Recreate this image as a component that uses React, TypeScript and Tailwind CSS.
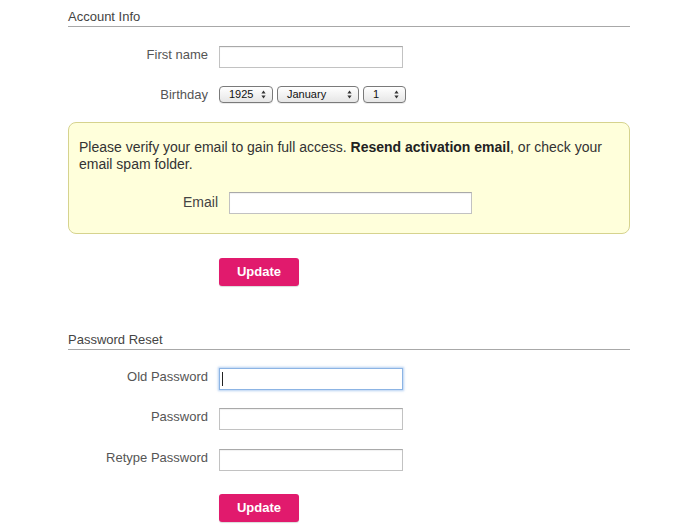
import { ReactNode } from "react";

const font = { fontFamily: '"Liberation Sans", Arial, Helvetica, sans-serif' };

function SectionTitle({ children }: { children: ReactNode }) {
    return (
        <div className="h-[18px] border-b border-[#a8a8a8] text-[13px] leading-[16px] text-[#444]">
            {children}
        </div>
    );
}

// label sits near the top edge of its field, not centred on it
function Row({ label, children, className = "", align = "items-start" }: { label: string; children: ReactNode; className?: string; align?: string }) {
    return (
        <div className={`flex ${align} gap-[11px] ${className}`}>
            <label className={`w-[140px] shrink-0 text-right text-[13px] leading-[16px] text-[#555] ${align === "items-start" ? "pt-[1px]" : ""}`}>
                {label}
            </label>
            {children}
        </div>
    );
}

function TextInput({ width = "w-[184px]", focused = false, type = "text" }: { width?: string; focused?: boolean; type?: string }) {
    return (
        <div className="relative">
            <input
                type={type}
                className={`${width} block h-[22px] rounded-none border bg-white px-1 text-[13px] outline-none ${
                    focused
                        ? "border-[#8cb4e4] shadow-[0_0_2px_1px_rgba(120,170,230,0.55)]"
                        : "border-[#c2c2c2] border-t-[#a9a9a9] shadow-[inset_0_1px_1px_rgba(0,0,0,0.06)]"
                }`}
            />
            {focused && <span className="pointer-events-none absolute left-[3px] top-[4px] h-[14px] w-px bg-[#222]" />}
        </div>
    );
}

function Arrows() {
    return (
        <svg width="5" height="9" viewBox="0 0 5 9" className="shrink-0">
            <path d="M2.5 0.5 L4.6 3.4 H0.4 Z" fill="#333" />
            <path d="M2.5 8.5 L4.6 5.6 H0.4 Z" fill="#333" />
        </svg>
    );
}

function PopUp({ value, width }: { value: string; width: string }) {
    return (
        <div
            className={`${width} flex h-[17px] items-center justify-between rounded-[4px] border border-[#7a7a7a] bg-gradient-to-b from-white to-[#e6e6e6] pl-[9px] pr-[6px] text-[11px] leading-[13px] text-[#111] shadow-[0_1px_0_rgba(0,0,0,0.08)]`}
        >
            <span>{value}</span>
            <Arrows />
        </div>
    );
}

function UpdateButton({ className = "" }: { className?: string }) {
    return (
        <button
            className={`ml-[151px] block h-[28px] w-[80px] rounded-[3px] bg-[#e11a6d] text-[13px] font-bold text-white shadow-[0_1px_1px_rgba(0,0,0,0.15)] ${className}`}
        >
            Update
        </button>
    );
}

export default function App() {
    return (
        <div className="h-[530px] w-[700px] bg-white pl-[68px] pt-[9px]" style={font}>
            <div className="w-[562px]">
                {/* Account Info */}
                <SectionTitle>Account Info</SectionTitle>

                <Row label="First name" className="mt-[19px]">
                    <TextInput />
                </Row>

                <Row label="Birthday" className="mt-[18px]" align="items-center">
                    <div className="flex gap-[4px]">
                        <PopUp value="1925" width="w-[54px]" />
                        <PopUp value="January" width="w-[82px]" />
                        <PopUp value="1" width="w-[43px]" />
                    </div>
                </Row>

                <div className="mt-[19px] h-[112px] rounded-[8px] border border-[#d6d38e] bg-[#ffffdb] px-[10px] pt-[16px]">
                    <p className="text-[14px] leading-[17px] text-[#333]">
                        Please verify your email to gain full access. <b className="text-[#222]">Resend activation email</b>, or
                        check your email spam folder.
                    </p>
                    <div className="mt-[19px] flex items-center gap-[11px]">
                        <label className="w-[139px] shrink-0 pb-[2px] text-right text-[14px] leading-[16px] text-[#444]">Email</label>
                        <TextInput width="w-[243px]" />
                    </div>
                </div>

                <UpdateButton className="mt-[24px]" />

                {/* Password Reset */}
                <div className="mt-[46px]">
                    <SectionTitle>Password Reset</SectionTitle>
                </div>

                <Row label="Old Password" className="mt-[18px]">
                    <TextInput focused type="password" />
                </Row>
                <Row label="Password" className="mt-[18px]">
                    <TextInput type="password" />
                </Row>
                <Row label="Retype Password" className="mt-[19px]">
                    <TextInput type="password" />
                </Row>

                <UpdateButton className="mt-[23px]" />
            </div>
        </div>
    );
}
